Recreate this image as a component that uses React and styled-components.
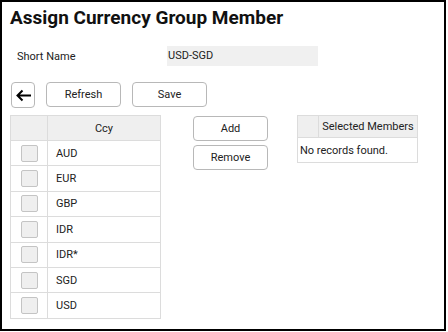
import React from "react";
import styled, { createGlobalStyle } from "styled-components";

const GlobalStyle = createGlobalStyle`
  body {
    margin: 0;
    background: #fff;
    font-family: Roboto, "Liberation Sans", sans-serif;
    color: #222;
  }
`;

const Frame = styled.div`
  box-sizing: border-box;
  width: 446px;
  height: 331px;
  border: 2px solid #000;
  padding: 3px 8px 0 8px;
`;

const Title = styled.h1`
  margin: 0;
  font-size: 19px;
  line-height: 25px;
  font-weight: 700;
  color: #111;
`;

const FieldRow = styled.div`
  display: flex;
  align-items: center;
  margin-top: 16px;
  height: 20px;
`;

const Label = styled.span`
  width: 157px;
  padding-left: 7px;
  box-sizing: border-box;
  font-size: 11px;
  color: #222;
`;

const ReadOnly = styled.div`
  width: 150px;
  height: 20px;
  background: #f0f0f0;
  font-size: 11px;
  line-height: 20px;
  padding-left: 1px;
  color: #222;
`;

const Toolbar = styled.div`
  display: flex;
  gap: 11px;
  margin-top: 16px;
  margin-left: 1px;
`;

const Button = styled.button`
  box-sizing: border-box;
  width: ${(p) => p.$w || 75}px;
  height: ${(p) => p.$h || 25}px;
  padding: 0;
  background: #fff;
  border: 1px solid #b8b8b8;
  border-radius: 4px;
  font-family: Roboto, "Liberation Sans", sans-serif;
  font-size: 11px;
  color: #222;
  display: flex;
  align-items: center;
  justify-content: center;
`;

const Content = styled.div`
  display: flex;
  align-items: flex-start;
  margin-top: 7px;
`;

const Table = styled.table`
  border-collapse: collapse;
  width: ${(p) => p.$w}px;
  font-size: 11px;
  color: #222;
  table-layout: fixed;
`;

const Th = styled.th`
  background: #efefef;
  border: 1px solid #dcdcdc;
  height: ${(p) => p.$h || 24}px;
  padding: 0;
  font-weight: 400;
  text-align: center;
  width: ${(p) => (p.$w ? `${p.$w}px` : "auto")};
`;

const Td = styled.td`
  border: 1px solid #dcdcdc;
  height: 24.4px;
  padding: 0 0 0 ${(p) => p.$pl || 0}px;
  text-align: ${(p) => p.$align || "left"};
`;

const Box = styled.span`
  display: inline-block;
  vertical-align: middle;
  width: 15px;
  height: 15px;
  background: #efefef;
  border: 1px solid #c4c4c4;
  border-radius: 2px;
`;

const ActionCol = styled.div`
  display: flex;
  flex-direction: column;
  gap: 4px;
  margin-left: 32px;
  margin-top: 1px;
`;

const RightTable = styled.div`
  margin-left: 29px;
`;

const currencies = ["AUD", "EUR", "GBP", "IDR", "IDR*", "SGD", "USD"];

function BackArrow() {
  return (
    <svg width="17" height="13" viewBox="0 0 17 13">
      <path d="M16 6.5H2.5M7.5 1.5l-5 5 5 5" fill="none" stroke="#000" strokeWidth="2" />
    </svg>
  );
}

export default function App() {
  return (
    <>
      <GlobalStyle />
      <Frame>
        <Title>Assign Currency Group Member</Title>
        <FieldRow>
          <Label>Short Name</Label>
          <ReadOnly>USD-SGD</ReadOnly>
        </FieldRow>
        <Toolbar>
          <Button $w={24} $h={26}>
            <BackArrow />
          </Button>
          <Button>Refresh</Button>
          <Button>Save</Button>
        </Toolbar>
        <Content>
          <Table $w={151}>
            <thead>
              <tr>
                <Th $w={36}></Th>
                <Th>Ccy</Th>
              </tr>
            </thead>
            <tbody>
              {currencies.map((c) => (
                <tr key={c}>
                  <Td $align="center">
                    <Box />
                  </Td>
                  <Td $pl={8}>{c}</Td>
                </tr>
              ))}
            </tbody>
          </Table>
          <ActionCol>
            <Button>Add</Button>
            <Button>Remove</Button>
          </ActionCol>
          <RightTable>
            <Table $w={121}>
              <thead>
                <tr>
                  <Th $w={20} $h={21}></Th>
                  <Th $h={21}>Selected Members</Th>
                </tr>
              </thead>
              <tbody>
                <tr>
                  <Td colSpan={2} $pl={2}>
                    No records found.
                  </Td>
                </tr>
              </tbody>
            </Table>
          </RightTable>
        </Content>
      </Frame>
    </>
  );
}
